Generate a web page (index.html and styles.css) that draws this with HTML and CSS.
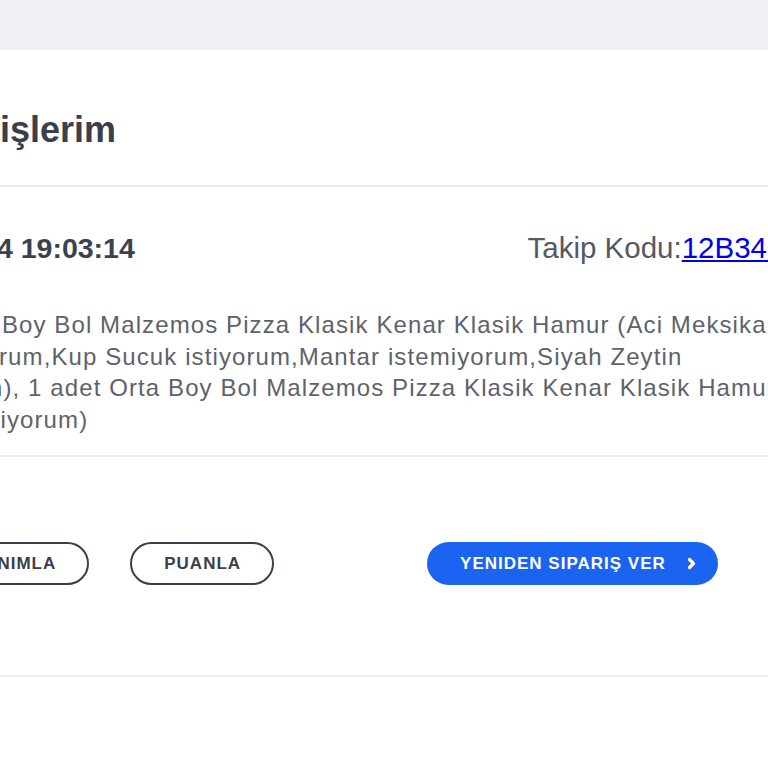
FILE: index.html
```html
<!DOCTYPE html>
<html lang="tr">
<head>
<meta charset="utf-8">
<title>Siparişlerim</title>
<link rel="stylesheet" href="styles.css">
</head>
<body>
<div class="topbar"></div>
<main class="page">
  <header class="head">
    <h1 class="title">Siparişlerim</h1>
  </header>
  <section class="order">
    <div class="order-top">
      <div class="order-date">2.03.2024 19:03:14</div>
      <div class="track">Takip Kodu:<a href="#" class="track-link">12B34C5D</a></div>
    </div>
    <p class="order-desc">
      <span class="line">1 adet Orta Boy Bol Malzemos Pizza Klasik Kenar Klasik Hamur (Aci Meksikan</span>
      <span class="line">Biberi istiyorum,Kup Sucuk istiyorum,Mantar istemiyorum,Siyah Zeytin</span>
      <span class="line">istemiyorum), 1 adet Orta Boy Bol Malzemos Pizza Klasik Kenar Klasik Hamur (Aci</span>
      <span class="line">(Mısır istemiyorum)</span>
    </p>
  </section>
  <section class="actions">
    <a href="#" class="btn btn-outline btn-first">TANIMLA</a>
    <a href="#" class="btn btn-outline">PUANLA</a>
    <a href="#" class="btn btn-primary">YENIDEN SIPARIŞ VER
      <svg class="chev" width="9" height="13" viewBox="0 0 9 13" aria-hidden="true"><polyline points="2.5,2.5 6.5,6.5 2.5,10.5" fill="none" stroke="#ffffff" stroke-width="3.2" stroke-linecap="round" stroke-linejoin="round"/></svg>
    </a>
  </section>
</main>
</body>
</html>
```

FILE: styles.css
```css
html, body {
  margin: 0;
  padding: 0;
  background: #ffffff;
  overflow: hidden;
  font-family: "Liberation Sans", Arial, sans-serif;
}

.topbar {
  height: 50px;
  background: #f0f1f5;
}

.page {
  margin-left: -114px;
  width: 940px;
}

.head {
  padding: 60px 0 35px 24px;
  border-bottom: 2px solid #eeeeef;
}

.title {
  margin: 0;
  font-size: 36px;
  line-height: 40px;
  font-weight: 700;
  color: #3b3f4c;
}

.order {
  padding: 44px 0 20px 0;
  border-bottom: 2px solid #eeeeef;
}

.order-top {
  display: flex;
  justify-content: space-between;
  align-items: center;
  height: 34px;
}

.order-date {
  font-size: 28.5px;
  line-height: 34px;
  font-weight: 700;
  color: #3c4150;
  white-space: nowrap;
}

.track {
  font-size: 29.5px;
  line-height: 34px;
  color: #545963;
  white-space: nowrap;
}

.track-link {
  color: #0000ee;
  text-decoration: underline;
}

.order-desc {
  margin: 44px 0 0 -24px;
  font-size: 24px;
  line-height: 31.5px;
  letter-spacing: 1.1px;
  color: #5e626b;
}

.line {
  display: block;
  white-space: nowrap;
}

.actions {
  display: flex;
  align-items: center;
  padding: 85px 0 90px 54px;
  border-bottom: 2px solid #eeeeef;
}

.btn {
  box-sizing: border-box;
  display: inline-flex;
  align-items: center;
  height: 43px;
  border-radius: 22px;
  font-size: 17px;
  font-weight: 700;
  letter-spacing: 1px;
  text-decoration: none;
  white-space: nowrap;
}

.btn-outline {
  padding: 0 31px 0 32px;
  border: 2px solid #3a3f4b;
  color: #3a3f4b;
  background: #ffffff;
}

.btn-outline + .btn-outline {
  margin-left: 41px;
}

.btn-primary {
  margin-left: 153px;
  padding: 0 22px 0 33px;
  background: #1b64f2;
  color: #ffffff;
  gap: 21px;
}

.chev {
  display: block;
}
```
